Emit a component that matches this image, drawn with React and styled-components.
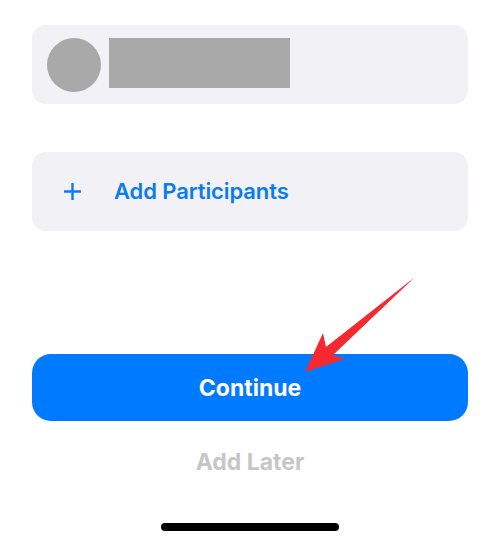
import React from 'react';
import styled, { createGlobalStyle } from 'styled-components';

const GlobalStyle = createGlobalStyle`
  html, body {
    margin: 0;
    padding: 0;
    background: #fff;
    font-family: Inter, "Liberation Sans", sans-serif;
  }
`;

const Screen = styled.div`
  position: relative;
  display: flex;
  flex-direction: column;
  width: 500px;
  height: 541px;
  padding: 25px 32px 0;
  box-sizing: border-box;
  overflow: hidden;
  background: #fff;
`;

const Card = styled.div`
  display: flex;
  align-items: center;
  height: 79px;
  border-radius: 14px;
  background: #f1f1f6;
`;

const PersonCard = styled(Card)`
  align-items: flex-start;
  gap: 8px;
  padding: 13px 0 0 15px;
  box-sizing: border-box;
`;

const Avatar = styled.div`
  width: 54px;
  height: 54px;
  border-radius: 50%;
  background: #a9a9a9;
`;

const NameBlock = styled.div`
  width: 181px;
  height: 50px;
  background: #a9a9a9;
`;

const AddCard = styled(Card)`
  gap: 32px;
  margin-top: 48px;
  padding-left: 31px;
  color: #0a7bf2;
`;

const PlusIcon = styled.svg`
  display: block;
  width: 19px;
  height: 19px;
`;

const AddLabel = styled.span`
  margin-bottom: 1px;
  font-size: 22px;
  font-weight: 600;
  letter-spacing: -0.1px;
`;

const ContinueButton = styled.div`
  display: flex;
  align-items: center;
  justify-content: center;
  height: 67px;
  margin-top: 123px;
  border-radius: 19px;
  background: #007aff;
  color: #fff;
  font-size: 23px;
  font-weight: 700;
`;

const LaterLabel = styled.div`
  margin-top: 28px;
  text-align: center;
  color: #c6c6c8;
  font-size: 23px;
  line-height: 26px;
  font-weight: 700;
`;

const HomeBar = styled.div`
  align-self: center;
  width: 178px;
  height: 8px;
  margin-top: 48px;
  border-radius: 4px;
  background: #000;
`;

const ArrowOverlay = styled.svg`
  position: absolute;
  left: 300px;
  top: 272px;
  width: 120px;
  height: 105px;
`;

export default function App() {
  return (
    <Screen>
      <GlobalStyle />
      <PersonCard>
        <Avatar />
        <NameBlock />
      </PersonCard>
      <AddCard>
        <PlusIcon viewBox="0 0 19 19">
          <path d="M9.5 1v17M1 9.5h17" stroke="currentColor" strokeWidth="2.4" fill="none" />
        </PlusIcon>
        <AddLabel>Add Participants</AddLabel>
      </AddCard>
      <ContinueButton>Continue</ContinueButton>
      <LaterLabel>Add Later</LaterLabel>
      <HomeBar />
      <ArrowOverlay viewBox="300 272 120 105">
        <polygon points="415,277 326,347 323,333 305,372 345,359 333,355" fill="#f5292f" />
      </ArrowOverlay>
    </Screen>
  );
}
